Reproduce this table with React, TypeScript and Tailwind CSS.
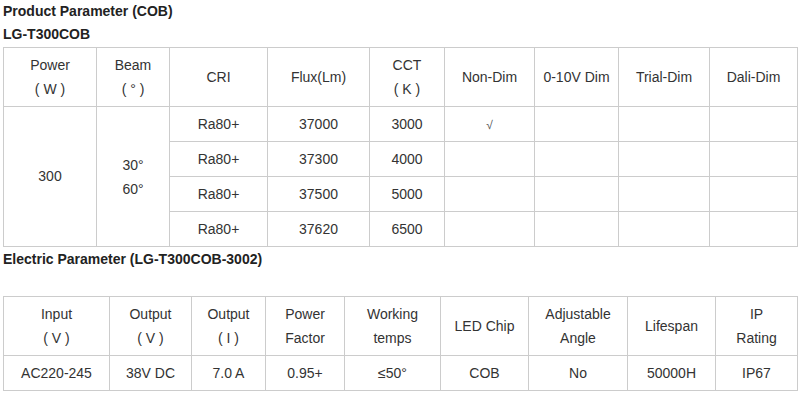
import React from 'react';

const cell = 'border border-[#cccccc] text-center align-middle p-0';

const specHead = [
  { w: 93, lines: ['Power', '( W )'] },
  { w: 73, lines: ['Beam', '( ° )'] },
  { w: 98, lines: ['CRI'] },
  { w: 102, lines: ['Flux(Lm)'] },
  { w: 75, lines: ['CCT', '( K )'] },
  { w: 90, lines: ['Non-Dim'] },
  { w: 84, lines: ['0-10V Dim'] },
  { w: 91, lines: ['Trial-Dim'] },
  { w: 88, lines: ['Dali-Dim'] },
];

const specRows = [
  { flux: '37000', cct: '3000', check: true },
  { flux: '37300', cct: '4000', check: false },
  { flux: '37500', cct: '5000', check: false },
  { flux: '37620', cct: '6500', check: false },
];

const elecHead = [
  { w: 106, lines: ['Input', '( V )'] },
  { w: 82, lines: ['Output', '( V )'] },
  { w: 74, lines: ['Output', '( I )'] },
  { w: 79, lines: ['Power', 'Factor'] },
  { w: 96, lines: ['Working', 'temps'] },
  { w: 88, lines: ['LED Chip'] },
  { w: 99, lines: ['Adjustable', 'Angle'] },
  { w: 88, lines: ['Lifespan'] },
  { w: 82, lines: ['IP', 'Rating'] },
];

const elecRow = ['AC220-245', '38V DC', '7.0 A', '0.95+', '≤50°', 'COB', 'No', '50000H', 'IP67'];

function HeadCell({ lines }: { lines: string[] }) {
  return (
    <td className={cell}>
      {lines.map((l) => (
        <div key={l} className="leading-[24px] whitespace-pre">
          {l}
        </div>
      ))}
    </td>
  );
}

export default function App() {
  return (
    <div
      className="w-[800px] h-[400px] overflow-hidden bg-white text-[14px] text-[#333333] pl-[3px]"
      style={{ fontFamily: '"Liberation Sans", Arial, sans-serif' }}
    >
      <div className="font-bold text-[#222222] leading-[23px]">Product Parameter (COB)</div>
      <div className="font-bold text-[#222222] leading-[23px] mb-px">LG-T300COB</div>

      {/* product table */}
      <table className="w-[794px] table-fixed border-collapse">
        <colgroup>
          {specHead.map((c, i) => (
            <col key={i} style={{ width: c.w }} />
          ))}
        </colgroup>
        <tbody>
          <tr className="h-[59px]">
            {specHead.map((c, i) => (
              <HeadCell key={i} lines={c.lines} />
            ))}
          </tr>
          {specRows.map((r, i) => (
            <tr key={r.flux} className="h-[35px]">
              {i === 0 && (
                <>
                  <td rowSpan={4} className={cell}>
                    300
                  </td>
                  <td rowSpan={4} className={cell}>
                    <div className="leading-[24px]">30°</div>
                    <div className="leading-[24px]">60°</div>
                  </td>
                </>
              )}
              <td className={cell}>Ra80+</td>
              <td className={cell}>{r.flux}</td>
              <td className={cell}>{r.cct}</td>
              <td className={cell}>
                {r.check && <span className="text-[12px] text-[#555555]">√</span>}
              </td>
              <td className={cell}></td>
              <td className={cell}></td>
              <td className={cell}></td>
            </tr>
          ))}
        </tbody>
      </table>

      <div className="font-bold text-[#222222] leading-[23px] mt-px">Electric Parameter (LG-T300COB-3002)</div>

      {/* electric table */}
      <table className="w-[794px] table-fixed border-collapse mt-[25px]">
        <colgroup>
          {elecHead.map((c, i) => (
            <col key={i} style={{ width: c.w }} />
          ))}
        </colgroup>
        <tbody>
          <tr className="h-[59px]">
            {elecHead.map((c, i) => (
              <HeadCell key={i} lines={c.lines} />
            ))}
          </tr>
          <tr className="h-[35px]">
            {elecRow.map((v) => (
              <td key={v} className={cell}>
                {v}
              </td>
            ))}
          </tr>
        </tbody>
      </table>
    </div>
  );
}
